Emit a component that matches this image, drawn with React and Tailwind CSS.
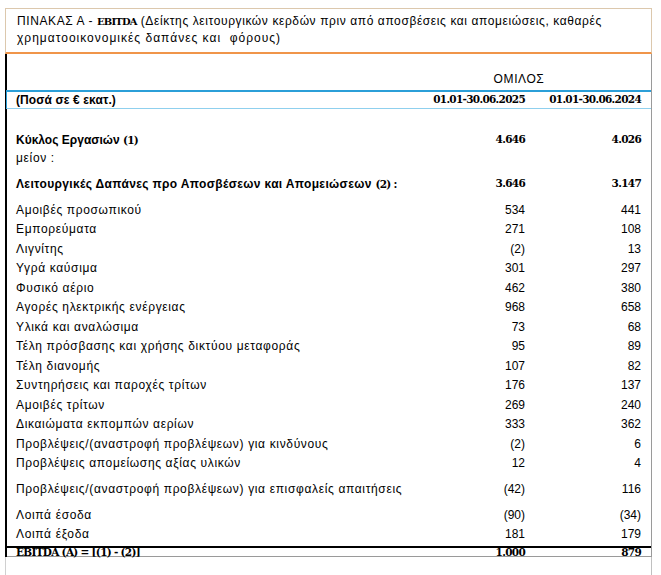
import React from "react";

const sans = "font-['Liberation_Sans',Arial,sans-serif]";
const serifB = "font-['DejaVu_Serif',serif] font-bold";
const num = `${serifB} text-[10.5px] tracking-[-0.7px]`;

const rows = [
  ["Αμοιβές προσωπικού", "534", "441"],
  ["Εμπορεύματα", "271", "108"],
  ["Λιγνίτης", "(2)", "13"],
  ["Υγρά καύσιμα", "301", "297"],
  ["Φυσικό αέριο", "462", "380"],
  ["Αγορές ηλεκτρικής ενέργειας", "968", "658"],
  ["Υλικά και αναλώσιμα", "73", "68"],
  ["Τέλη πρόσβασης και χρήσης δικτύου μεταφοράς", "95", "89"],
  ["Τέλη διανομής", "107", "82"],
  ["Συντηρήσεις και παροχές τρίτων", "176", "137"],
  ["Αμοιβές τρίτων", "269", "240"],
  ["Δικαιώματα εκπομπών αερίων", "333", "362"],
  ["Προβλέψεις/(αναστροφή προβλέψεων) για κινδύνους", "(2)", "6"],
  ["Προβλέψεις απομείωσης αξίας υλικών", "12", "4"],
];

function Row({ label, a, b, h = "h-[19.5px]", bold = false }) {
  return (
    <div className={`flex items-center ${h}`}>
      <div className={`flex-1 pl-[9px] whitespace-nowrap ${bold ? "" : "tracking-[0.65px]"}`}>{label}</div>
      <div className={`w-[121px] text-right pr-[3px] ${bold ? num : ""}`}>{a}</div>
      <div className={`w-[123px] text-right pr-[10px] ${bold ? num : ""}`}>{b}</div>
    </div>
  );
}

export default function App() {
  return (
    <div className={`bg-white w-[661px] h-[575px] overflow-hidden pt-[8px] pl-[5px] text-black text-[12px] ${sans}`}>
      <div className="w-[647px]">
        {/* Title */}
        <div className="border-t border-x border-[#dcc8ad] border-b-2 border-b-[#f0954a] h-[46px] pl-[11px] pt-[4px] leading-[17px] whitespace-nowrap">
          <div className="tracking-[0.6px]">
            ΠΙΝΑΚΑΣ Α - <span className={`${serifB} text-[10px] tracking-[-0.8px]`}>EBITDA</span> (Δείκτης λειτουργικών κερδών πριν από αποσβέσεις και απομειώσεις, καθαρές
          </div>
          <div className="tracking-[1px]">χρηματοοικονομικές δαπάνες και &nbsp;φόρους)</div>
        </div>
        {/* Main frame */}
        <div className="border-l-2 border-l-black border-r border-r-[#9a9a9a]">
          <div className="h-[36px] flex items-end pb-[2px]">
            <div className="flex-1" />
            <div className="w-[244px] text-center pr-[20px] leading-[17px] tracking-[0.6px]">ΟΜΙΛΟΣ</div>
          </div>
          <div className="border-t-2 border-t-[#2b9fd8] border-b border-b-[#8fd0ee] h-[19px] flex items-center -ml-[1px] border-l border-l-[#2b9fd8]">
            <div className="flex-1 pl-[9px] font-bold text-[12px] tracking-[0.1px]">(Ποσά σε € εκατ.)</div>
            <div className={`w-[121px] text-right pr-[3px] ${num}`}>01.01-30.06.2025</div>
            <div className={`w-[123px] text-right pr-[10px] ${num}`}>01.01-30.06.2024</div>
          </div>
          <div className="h-[21px]" />
          <Row
            h="h-[19px]"
            bold
            label={<span className="font-bold">Κύκλος Εργασιών <span className={num}>(1)</span></span>}
            a="4.646"
            b="4.026"
          />
          <Row h="h-[18px]" label="μείον :" a="" b="" />
          <Row
            h="h-[33px]"
            bold
            label={<span className="font-bold tracking-[0.35px]">Λειτουργικές Δαπάνες προ Αποσβέσεων και Απομειώσεων <span className={num}>(2) :</span></span>}
            a="3.646"
            b="3.147"
          />
          {rows.map(([l, a, b]) => (
            <Row key={l} label={l} a={a} b={b} />
          ))}
          <Row h="h-[32px]" label="Προβλέψεις/(αναστροφή προβλέψεων) για επισφαλείς απαιτήσεις" a="(42)" b="116" />
          <Row h="h-[19px]" label="Λοιπά έσοδα" a="(90)" b="(34)" />
          <Row h="h-[19px]" label="Λοιπά έξοδα" a="181" b="179" />
          <div className="h-[3px]" />
          <div className={`border-t-2 border-t-black border-b border-b-[#9a9a9a] h-[11px] flex items-center ${num} leading-[8px]`}>
            <div className="flex-1 pl-[9px]">EBITDA (A) = [(1) - (2)]</div>
            <div className="w-[121px] text-right pr-[3px]">1.000</div>
            <div className="w-[123px] text-right pr-[10px]">879</div>
          </div>
        </div>
        <div className="h-[30px] border-l border-l-[#d0d0d0] border-r border-r-[#c0c0c0]" />
      </div>
    </div>
  );
}
